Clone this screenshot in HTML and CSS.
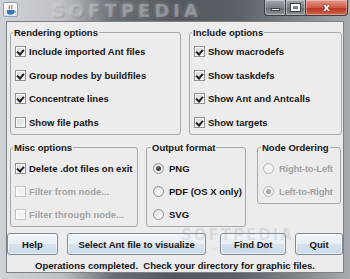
FILE: index.html
```html
<!DOCTYPE html>
<html lang="en">

<head>
    <meta charset="UTF-8">
    <title>Ant visualizer</title>
    <link rel="stylesheet" href="styles.css">
</head>

<body>
    <div class="window">
        <div class="titlebar">
            <div class="app-icon">
                <svg viewBox="0 0 12 12" width="12" height="12">
                    <path d="M4 1.5c1.5 1 -1 2 0.5 3.5M6.5 1c1.8 1.2 -1 2.4 0.6 3.8" stroke="#e0502a" stroke-width="1.1" fill="none" />
                    <path d="M2 6h7v2.5c0 1.5 -1.5 2.2 -3.5 2.2s-3.5 -0.7 -3.5 -2.2z" fill="#3a72b8" />
                    <path d="M9 6.8h1.2v1.4h-1.2" stroke="#3a72b8" stroke-width="0.8" fill="none" />
                </svg>
            </div>
            <div class="watermark">SOFTPEDIA</div>
            <div class="controls">
                <span class="ctl ctl-min"><i></i></span>
                <span class="ctl ctl-max"><i></i></span>
                <span class="ctl ctl-close">x</span>
            </div>
        </div>

        <div class="client">
            <div class="row row-top">
                <fieldset class="group group-render">
                    <legend>Rendering options</legend>
                    <label class="opt"><span class="box checked"></span>Include imported Ant files</label>
                    <label class="opt"><span class="box checked"></span>Group nodes by buildfiles</label>
                    <label class="opt"><span class="box checked"></span>Concentrate lines</label>
                    <label class="opt"><span class="box"></span>Show file paths</label>
                </fieldset>
                <fieldset class="group group-include">
                    <legend>Include options</legend>
                    <label class="opt"><span class="box checked"></span>Show macrodefs</label>
                    <label class="opt"><span class="box checked"></span>Show taskdefs</label>
                    <label class="opt"><span class="box checked"></span>Show Ant and Antcalls</label>
                    <label class="opt"><span class="box checked"></span>Show targets</label>
                </fieldset>
            </div>

            <div class="row row-mid">
                <fieldset class="group group-misc">
                    <legend>Misc options</legend>
                    <label class="opt"><span class="box checked"></span>Delete .dot files on exit</label>
                    <label class="opt disabled"><span class="box"></span>Filter from node...</label>
                    <label class="opt disabled"><span class="box"></span>Filter through node...</label>
                </fieldset>
                <fieldset class="group group-output">
                    <legend>Output format</legend>
                    <label class="opt"><span class="radio selected"></span>PNG</label>
                    <label class="opt"><span class="radio"></span>PDF (OS X only)</label>
                    <label class="opt"><span class="radio"></span>SVG</label>
                </fieldset>
                <fieldset class="group group-order">
                    <legend>Node Ordering</legend>
                    <label class="opt disabled"><span class="radio"></span>Right-to-Left</label>
                    <label class="opt disabled"><span class="radio selected"></span>Left-to-Right</label>
                </fieldset>
            </div>

            <div class="buttons">
                <button class="btn btn-help">Help</button>
                <button class="btn btn-select">Select Ant file to visualize</button>
                <button class="btn btn-find">Find Dot</button>
                <button class="btn btn-quit">Quit</button>
            </div>

            <div class="status">Operations completed.&nbsp; Check your directory for graphic files.</div>

            <div class="stamp">
                <span class="stamp-name">SOFTPEDIA<sup>™</sup></span>
                <span class="stamp-url">www.softpedia.com</span>
            </div>
        </div>
    </div>
</body>

</html>
```

FILE: styles.css
```css
* {
    box-sizing: border-box;
}

body {
    margin: 0;
    width: 350px;
    height: 279px;
    overflow: hidden;
    font-family: "Liberation Sans", Arial, sans-serif;
    font-size: 9.5px;
    font-weight: bold;
    color: #151515;
}

.window {
    height: 279px;
    display: flex;
    flex-direction: column;
    background: linear-gradient(90deg, #cfd3d7 0%, #bcc0c4 18%, #6a6f75 32%, #53585e 50%, #5c6167 68%, #80858a 85%, #a6abb0 100%);
}

/* title bar */

.titlebar {
    height: 21px;
    display: flex;
    align-items: flex-start;
    position: relative;
}

.app-icon {
    width: 15px;
    height: 15px;
    margin: 2px 0 0 3px;
    border: 1px solid #8fa2b8;
    border-radius: 2px;
    background: linear-gradient(#fdfdfd, #dfe6ee);
    display: grid;
    place-items: center;
}

.watermark {
    flex: 1;
    text-align: center;
    font-family: "DejaVu Sans", sans-serif;
    font-size: 18px;
    letter-spacing: 4px;
    line-height: 21px;
    color: rgba(225, 228, 232, 0.32);
    text-shadow: 0 0 4px rgba(255, 255, 255, 0.35), 1px 1px 2px rgba(40, 40, 40, 0.3);
    padding-right: 28px;
}

.controls {
    display: flex;
    margin-right: 2px;
}

.ctl {
    height: 16px;
    width: 21px;
    border: 1px solid #3b3f44;
    border-top: none;
    background: linear-gradient(#a3a8ae, #7b8187 50%, #676d73 51%, #8c9298);
    display: grid;
    place-items: center;
    box-shadow: inset 0 0 0 1px rgba(255, 255, 255, 0.35);
}

.ctl-min {
    border-radius: 0 0 0 4px;
    border-right: none;
}

.ctl-min i {
    width: 9px;
    height: 3px;
    margin-top: 4px;
    background: #fff;
    border: 1px solid #3b3f44;
}

.ctl-max i {
    width: 9px;
    height: 7px;
    border: 2px solid #fff;
    outline: 1px solid #3b3f44;
}

.ctl-close {
    width: 42px;
    border-left: none;
    border-radius: 0 0 4px 0;
    background: linear-gradient(#e49a8c, #cf5a45 50%, #b7321d 51%, #d2664c);
    color: #fff;
    font-family: "DejaVu Sans", sans-serif;
    font-size: 11px;
    line-height: 1;
    text-shadow: 0 0 1px #3b1a12, 0 0 1px #3b1a12;
}

/* client area */

.client {
    flex: 1;
    margin: 0 6px 6px;
    border: 1px solid #7c8187;
    background-color: #ececec;
    display: flex;
    flex-direction: column;
    position: relative;
}

.row {
    display: flex;
    align-items: flex-start;
    margin-left: 3px;
}

.row-top {
    margin-top: 5px;
    gap: 8px;
}

.row-mid {
    margin-top: 7px;
}

.group {
    margin: 0;
    padding: 2px 4px 0;
    border: 1px solid #a9a9a9;
    border-radius: 3px;
    min-width: 0;
}

.group legend {
    padding: 0 1px;
    margin-left: -2px;
    line-height: 11px;
}

.group-render {
    width: 171px;
}

.group-include {
    width: 153px;
}

.group-misc {
    width: 128px;
    padding-top: 4px;
}

.group-output {
    width: 100px;
    margin-left: 8px;
    padding: 4px 5px 0 6px;
}

.group-order {
    width: 84px;
    margin-left: 11px;
    padding: 4px 0 0 5px;
}

.group-order .opt {
    letter-spacing: -0.25px;
}

.opt {
    display: flex;
    align-items: center;
    gap: 3px;
    height: 23.5px;
    white-space: nowrap;
}

.row-mid .opt {
    height: 23px;
}

.opt.disabled {
    color: #a3a3a3;
}

.box {
    flex: none;
    width: 11px;
    height: 11px;
    border: 1px solid #8e8f8f;
    background: linear-gradient(135deg, #cfd4da, #f7f8f9);
    box-shadow: inset 0 0 0 1px #fdfdfd;
    position: relative;
}

.box.checked::after {
    content: "";
    position: absolute;
    left: 2px;
    top: 1px;
    width: 3px;
    height: 5px;
    border: solid #1e1e1e;
    border-width: 0 2px 2px 0;
    transform: rotate(40deg);
}

.disabled .box {
    border-color: #c3c3c3;
    background: #f3f3f3;
}

.radio {
    flex: none;
    width: 11px;
    height: 11px;
    border: 1px solid #8e8f8f;
    border-radius: 50%;
    background: radial-gradient(circle at 60% 65%, #fbfbfb, #d7dbe0);
    display: grid;
    place-items: center;
    margin-right: 2px;
}

.radio.selected::after {
    content: "";
    width: 5px;
    height: 5px;
    border-radius: 50%;
    background: radial-gradient(circle at 40% 35%, #6e6e6e, #111);
}

.disabled .radio {
    border-color: #b5b5b5;
    background: #f2f2f2;
}

.disabled .radio.selected::after {
    background: #a8a8a8;
}

/* buttons and status */

.buttons {
    display: flex;
    margin-top: 6px;
}

.btn {
    height: 22px;
    padding: 0;
    font: inherit;
    color: #151515;
    border: 1px solid #7d8b99;
    border-radius: 3px;
    background: linear-gradient(#f2f6fb, #e6eef6 48%, #d6e2ee 52%, #cddbe9);
    box-shadow: inset 0 0 0 1px rgba(255, 255, 255, 0.6);
}

.btn-help {
    width: 51px;
}

.btn-select {
    width: 140px;
    margin-left: 9px;
}

.btn-find {
    width: 66px;
    margin-left: 14px;
}

.btn-quit {
    width: 48px;
    margin-left: 9px;
}

.status {
    margin-top: 5px;
    line-height: 12px;
    text-align: center;
}

.stamp {
    position: absolute;
    left: 174px;
    top: 206px;
    display: flex;
    flex-direction: column;
    align-items: center;
    line-height: 1;
    color: rgba(120, 120, 120, 0.16);
    pointer-events: none;
}

.stamp-name {
    font-family: "DejaVu Sans", sans-serif;
    font-size: 15px;
    letter-spacing: 2px;
}

.stamp-name sup {
    font-size: 6px;
}

.stamp-url {
    margin-top: 2px;
    font-weight: normal;
    font-size: 7px;
}
```
